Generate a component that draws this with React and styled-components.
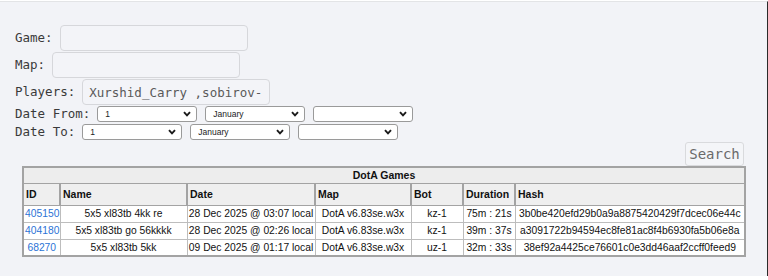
import React from 'react';
import styled, { createGlobalStyle } from 'styled-components';

const GlobalStyle = createGlobalStyle`
  html, body {
    margin: 0;
    padding: 0;
    background: #ffffff;
  }
  * { box-sizing: border-box; }
`;

const games = [
  { id: '405150', name: '5x5 xl83tb 4kk re', date: '28 Dec 2025 @ 03:07 local', map: 'DotA v6.83se.w3x', bot: 'kz-1', duration: '75m : 21s', hash: '3b0be420efd29b0a9a8875420429f7dcec06e44c' },
  { id: '404180', name: '5x5 xl83tb go 56kkkk', date: '28 Dec 2025 @ 02:26 local', map: 'DotA v6.83se.w3x', bot: 'kz-1', duration: '39m : 37s', hash: 'a3091722b94594ec8fe81ac8f4b6930fa5b06e8a' },
  { id: '68270', name: '5x5 xl83tb 5kk', date: '09 Dec 2025 @ 01:17 local', map: 'DotA v6.83se.w3x', bot: 'uz-1', duration: '32m : 33s', hash: '38ef92a4425ce76601c0e3dd46aaf2ccff0feed9' },
];

const columns = [
  { title: 'ID', width: 37 },
  { title: 'Name', width: 127 },
  { title: 'Date', width: 128 },
  { title: 'Map', width: 96 },
  { title: 'Bot', width: 52 },
  { title: 'Duration', width: 52 },
  { title: 'Hash', width: 230 },
];

const Page = styled.div`
  margin-top: 1px;
  height: 275px;
  background: #f2f3f7;
  border-top: 1px solid #e3e4e6;
  border-right: 1px solid #2a2a2a;
  padding: 23px 23px 0 15px;
`;

const Form = styled.form`
  display: flex;
  flex-direction: column;
`;

const Row = styled.div`
  display: flex;
  align-items: center;
  gap: 7px;
  height: ${(p) => (p.$small ? 16 : 26)}px;
  margin-bottom: ${(p) => p.$after || 1}px;
`;

const Label = styled.label`
  flex-shrink: 0;
  font-family: "DejaVu Sans Mono", "Liberation Mono", monospace;
  font-size: 12.5px;
  color: #3a3a3a;
  line-height: 16px;
  white-space: pre;
`;

const TextInput = styled.input`
  flex-shrink: 0;
  width: 188px;
  height: 26px;
  background: #f3f4f8;
  border: 1px solid #d6d7db;
  border-radius: 4px;
  padding: 0 6px;
  font-family: "DejaVu Sans Mono", "Liberation Mono", monospace;
  font-size: 12.5px;
  color: #5a5a5a;
  outline: none;
`;

const Selects = styled.div`
  display: flex;
  flex-shrink: 0;
  gap: 8px;
`;

const SelectBox = styled.div`
  position: relative;
  flex: 0 0 100px;
  width: 100px;
  height: 16px;
`;

const Select = styled.select`
  appearance: none;
  display: block;
  width: 100px;
  height: 16px;
  background: #ffffff;
  border: 1px solid #9a9a9a;
  border-radius: 3px;
  padding: 0 0 0 7px;
  font-family: "Liberation Sans", Arial, sans-serif;
  font-size: 8.5px;
  color: #222;
  outline: none;
`;

const Chevron = styled.svg`
  position: absolute;
  right: 6px;
  top: 5px;
  width: 8px;
  height: 6px;
  pointer-events: none;
`;

const SearchRow = styled.div`
  display: flex;
  justify-content: flex-end;
  margin-top: 1px;
`;

const SearchButton = styled.button`
  width: 59px;
  height: 24px;
  padding: 0;
  background: #f4f5f8;
  border: 1px solid #d9dadd;
  border-radius: 3px;
  font-family: "DejaVu Sans Mono", "Liberation Mono", monospace;
  font-size: 14px;
  color: #6a6a6a;
`;

const Table = styled.table`
  margin-left: 7px;
  width: 722px;
  table-layout: fixed;
  border-collapse: collapse;
  border: 2px solid #a3a3a3;
  font-family: "Liberation Sans", Arial, sans-serif;
  font-size: 10.3px;
  color: #111;
`;

const Caption = styled.th`
  height: 16px;
  background: #ededed;
  text-align: center;
  font-weight: bold;
  font-size: 10.5px;
  border: 1px solid #a3a3a3;
  padding: 0;
`;

const Head = styled.th`
  height: 22px;
  background: #efefef;
  text-align: left;
  font-weight: bold;
  font-size: 10.5px;
  padding: 0 2px;
  border: 1px solid #a3a3a3;
  border-right-width: 2px;
  white-space: nowrap;
  overflow: hidden;
`;

const Cell = styled.td`
  height: 17px;
  background: #ffffff;
  text-align: center;
  padding: 0 1px;
  border: 1px solid #bdbdbd;
  white-space: nowrap;
  overflow: hidden;
`;

const IdLink = styled.a`
  color: #2b73d6;
  text-decoration: none;
`;

const DateSelects = ({ month }) => (
  <Selects>
    {['1', month, ''].map((v, i) => (
      <SelectBox key={i}>
        <Select defaultValue={v}>
          <option value={v}>{v}</option>
        </Select>
        <Chevron viewBox="0 0 8 6">
          <path d="M1 1.2 L4 4.4 L7 1.2" fill="none" stroke="#1a1a1a" strokeWidth="1.9" />
        </Chevron>
      </SelectBox>
    ))}
  </Selects>
);

export default function App() {
  return (
    <>
      <GlobalStyle />
      <Page>
        <Form onSubmit={(e) => e.preventDefault()}>
          <Row>
            <Label>Game:</Label>
            <TextInput />
          </Row>
          <Row>
            <Label>Map:</Label>
            <TextInput />
          </Row>
          <Row>
            <Label>Players:</Label>
            <TextInput defaultValue="Xurshid_Carry ,sobirov-" />
          </Row>
          <Row $small $after={2}>
            <Label>Date From:</Label>
            <DateSelects month="January" />
          </Row>
          <Row $small>
            <Label>Date To:</Label>
            <DateSelects month="January" />
          </Row>
          <SearchRow>
            <SearchButton type="submit">Search</SearchButton>
          </SearchRow>
        </Form>
        <Table>
          <colgroup>
            {columns.map((c) => (
              <col key={c.title} style={{ width: c.width }} />
            ))}
          </colgroup>
          <thead>
            <tr>
              <Caption colSpan={7}>DotA Games</Caption>
            </tr>
            <tr>
              {columns.map((c) => (
                <Head key={c.title}>{c.title}</Head>
              ))}
            </tr>
          </thead>
          <tbody>
            {games.map((g) => (
              <tr key={g.id}>
                <Cell><IdLink href="#">{g.id}</IdLink></Cell>
                <Cell>{g.name}</Cell>
                <Cell>{g.date}</Cell>
                <Cell>{g.map}</Cell>
                <Cell>{g.bot}</Cell>
                <Cell>{g.duration}</Cell>
                <Cell>{g.hash}</Cell>
              </tr>
            ))}
          </tbody>
        </Table>
      </Page>
    </>
  );
}
